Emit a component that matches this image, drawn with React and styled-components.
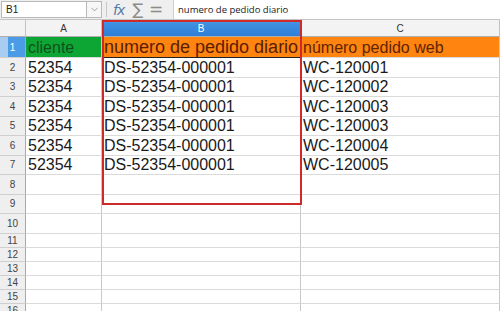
import React from "react";
import styled, { createGlobalStyle } from "styled-components";
import { ChevronDown } from "lucide-react";

const GlobalStyle = createGlobalStyle`
  * { box-sizing: border-box; }
  body {
    margin: 0;
    background: #ffffff;
    font-family: "Liberation Sans", Arial, sans-serif;
    overflow: hidden;
  }
`

const Page = styled.div`
  position: relative;
  width: 500px;
  height: 311px;
  overflow: hidden;
  background: #ffffff;
`

const Toolbar = styled.div`
  height: 20px;
  display: flex;
  align-items: center;
  background: #efefef;
  border-bottom: 1px solid #c4c4c4;
  padding-left: 1px;
`

const NameBox = styled.div`
  width: 85px;
  height: 17px;
  display: flex;
  align-items: center;
  padding-left: 4px;
  background: #ffffff;
  border: 1px solid #b9b9b9;
  border-right: none;
  font-size: 10px;
  color: #222;
`

const DropButton = styled.div`
  width: 16px;
  height: 17px;
  display: flex;
  align-items: center;
  justify-content: center;
  background: #f7f7f7;
  border: 1px solid #b9b9b9;
  color: #777;
`

const Separator = styled.div`
  width: 1px;
  height: 15px;
  margin: 0 6px 0 4px;
  background: #c8c8c8;
`

const Fx = styled.span`
  font-family: "DejaVu Sans", sans-serif;
  font-style: italic;
  font-size: 14px;
  color: #5879a3;
  width: 18px;
  letter-spacing: -1px;
`

const Glyph = styled.span`
  font-family: "DejaVu Sans", sans-serif;
  font-size: ${(p) => p.$size}px;
  color: #8b8b8b;
  width: ${(p) => p.$width}px;
  text-align: center;
  line-height: 1;
`

const FormulaInput = styled.div`
  flex: 1;
  height: 19px;
  margin-left: 6px;
  display: flex;
  align-items: center;
  padding-left: 4px;
  background: #ffffff;
  border-left: 1px solid #cfcfcf;
  font-family: "Open Sans", "Liberation Sans", sans-serif;
  font-size: 9.5px;
  color: #222;
`

const Grid = styled.div`
  display: grid;
  grid-template-columns: 26px 76px 199px 199px;
`

const ColHeader = styled.div`
  height: 17px;
  display: flex;
  align-items: center;
  justify-content: center;
  font-size: 10px;
  color: ${(p) => (p.$active ? "#ffffff" : "#333")};
  background: ${(p) =>
    p.$active ? "linear-gradient(#78b4ee 0px, #3f8fe2 3px, #2f7fd6 100%)" : "#f3f3f3"};
  border-right: 1px solid #c2c2c2;
  border-bottom: 1px solid #aeaeae;
`

const RowHeader = styled.div`
  height: ${(p) => p.$h}px;
  display: flex;
  align-items: center;
  justify-content: center;
  font-size: 10px;
  color: ${(p) => (p.$active ? "#ffffff" : "#444")};
  background: ${(p) =>
    p.$active ? "linear-gradient(90deg, #a9cdf1 0px, #a9cdf1 8px, #4b9be6 8px)" : "#efefef"};
  border-right: 1px solid #a9a9a9;
  border-bottom: 1px solid #cfcfcf;
`

const Cell = styled.div`
  height: ${(p) => p.$h}px;
  display: flex;
  align-items: flex-end;
  padding-left: 2px;
  overflow: visible;
  white-space: nowrap;
  font-size: ${(p) => p.$size || 16}px;
  line-height: ${(p) => p.$size || 16}px;
  padding-bottom: 1px;
  color: ${(p) => p.$color || "#1a1a1a"};
  background: ${(p) => p.$bg || "#ffffff"};
  border-right: 1px solid #c8c8c8;
  border-bottom: 1px solid ${(p) => (p.$cursor ? "#222" : "#dadada")};
`

const Annotation = styled.div`
  position: absolute;
  left: 102px;
  top: 20px;
  width: 200px;
  height: 185px;
  border: 2px solid #cf2a2a;
  pointer-events: none;
`

const GREEN = "#0da634";
const ORANGE = "#ff8410";

const dataRows = [
  ["52354", "DS-52354-000001", "WC-120001"],
  ["52354", "DS-52354-000001", "WC-120002"],
  ["52354", "DS-52354-000001", "WC-120003"],
  ["52354", "DS-52354-000001", "WC-120003"],
  ["52354", "DS-52354-000001", "WC-120004"],
  ["52354", "DS-52354-000001", "WC-120005"],
];

// row 1 is taller, rows up to 10 are enlarged, the rest default height
const heights = [21, 19.5, 19.5, 19.5, 19.5, 19.5, 19.5, 19.5, 19.5, 19.5, 14, 14, 14, 14, 14, 14];

const App = () => {
  return (
    <Page>
      <GlobalStyle />
      <Toolbar>
        <NameBox>B1</NameBox>
        <DropButton><ChevronDown size={11} strokeWidth={1.5} /></DropButton>
        <Separator />
        <Fx>fx</Fx>
        <Glyph $size={16} $width={14}>∑</Glyph>
        <Glyph $size={17} $width={22}>=</Glyph>
        <FormulaInput>numero de pedido diario</FormulaInput>
      </Toolbar>

      <Grid>
        <ColHeader />
        <ColHeader>A</ColHeader>
        <ColHeader $active>B</ColHeader>
        <ColHeader>C</ColHeader>

        {heights.map((h, i) => {
          const n = i + 1;
          if (n === 1) {
            return (
              <React.Fragment key={n}>
                <RowHeader $h={h} $active>1</RowHeader>
                <Cell $h={h} $bg={GREEN} $color="#134f1c">cliente</Cell>
                <Cell $h={h} $bg={ORANGE} $color="#5a1d00" $size={18} $cursor>numero de pedido diario</Cell>
                <Cell $h={h} $bg={ORANGE} $color="#5e2500">número pedido web</Cell>
              </React.Fragment>
            );
          }
          const row = dataRows[i - 1] || ["", "", ""];
          return (
            <React.Fragment key={n}>
              <RowHeader $h={h}>{n}</RowHeader>
              <Cell $h={h}>{row[0]}</Cell>
              <Cell $h={h}>{row[1]}</Cell>
              <Cell $h={h}>{row[2]}</Cell>
            </React.Fragment>
          );
        })}
      </Grid>

      <Annotation />
    </Page>
  );
};

export default App;
